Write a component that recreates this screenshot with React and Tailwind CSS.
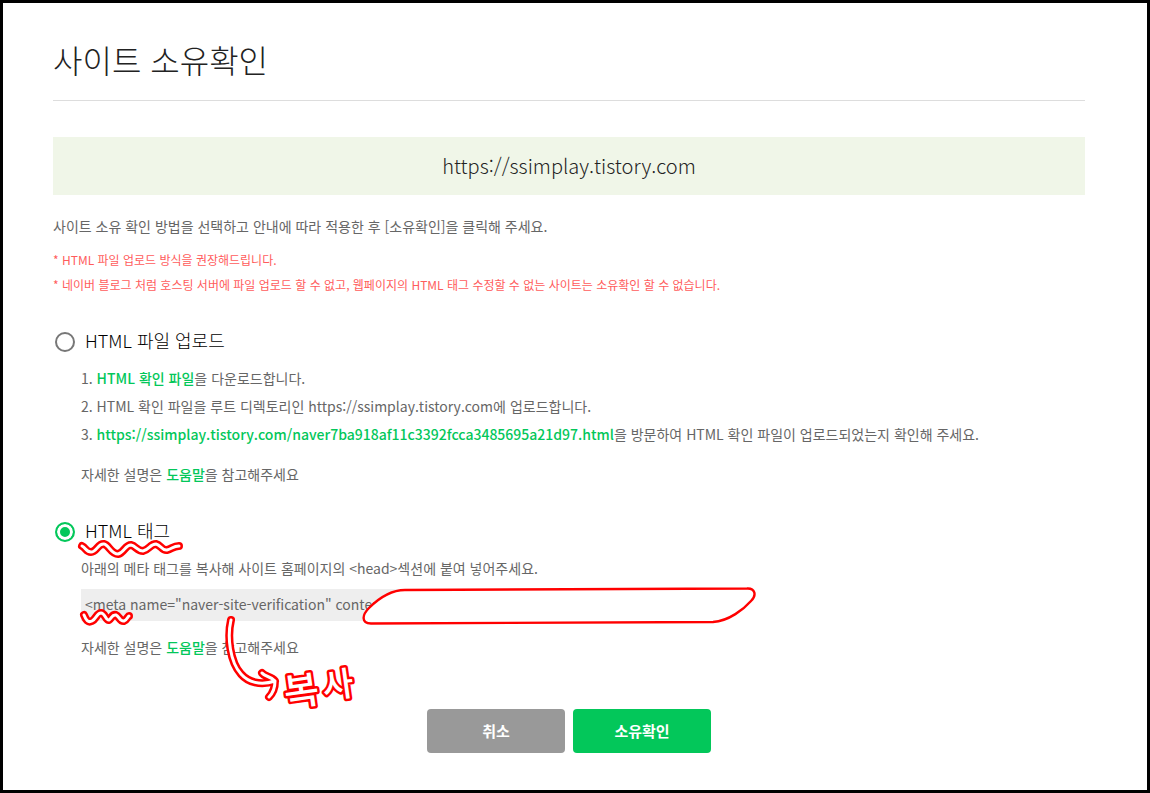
import { useState } from "react";

const SITE_URL = "https://ssimplay.tistory.com";
const META_TAG = '<meta name="naver-site-verification" content=';

function GreenLink({ children }) {
  return (
    <a href="#" className="font-medium text-[#03c75a]">
      {children}
    </a>
  );
}

function Method({ id, label, checked, onSelect, children }) {
  return (
    <section className="relative">
      <div className="flex h-6 items-center gap-2.5 pl-0.5">
        <input
          id={id}
          type="radio"
          name="method"
          checked={checked}
          onChange={onSelect}
          className="size-5 shrink-0 appearance-none rounded-full border-2 border-[#777] bg-white checked:border-[#03c75a] checked:bg-[#03c75a] checked:shadow-[inset_0_0_0_3px_white]"
        />
        <label htmlFor={id} className="pb-1 text-lg leading-5 font-light text-black">
          {label}
        </label>
      </div>
      <div className="pl-7">{children}</div>
    </section>
  );
}

// Red marker strokes with a white core
function Marker({ d }) {
  return (
    <g fill="none" strokeLinecap="round" strokeLinejoin="round">
      <path d={d} stroke="#ff0000" strokeWidth="8" />
      <path d={d} stroke="#ffffff" strokeWidth="3" />
    </g>
  );
}

function Notes() {
  return (
    <svg
      viewBox="53 520 710 200"
      width="710"
      height="200"
      className="pointer-events-none absolute top-0 left-0"
      aria-hidden="true"
    >
      <path
        d="M405 590 L747 588.500 C755 588 757 595 751 601 C744 609 729 621 713 622 L371 623.500 C361 623 362 615 369 608 C379 598 391 590 405 590 Z"
        fill="#fff"
        stroke="#ff0000"
        strokeWidth="2.400"
      />
      <Marker d="M82 546 C86 548 86 552 91 552 C97 552 98 543 104 544 C109 545 111 554 118 554 C124 553 125 545 131 545 C136 546 137 551 143 551 C149 550 150 544 156 544 C161 545 162 551 167 550 C172 549 173 546 179 546" />
      <Marker d="M84 615 C86 620 88 623 92 621 C96 619 97 613 101 613 C105 613 106 621 109 620 C112 618 112 614 116 615 C119 616 120 622 124 621 C127 620 128 616 129 616" />
      <Marker d="M231 620 C227 637 230 662 241 674 C248 682 260 686 275 681 M262 673 C265 677 271 676 275 681 C275 687 273 693 269 697" />
      <text
        fontFamily="'Noto Sans CJK KR', sans-serif"
        fontWeight="500"
        fill="#fff"
        stroke="#ff0000"
        strokeWidth="5"
        strokeLinejoin="round"
        paintOrder="stroke"
      >
        <tspan x="286" y="707" fontSize="38" rotate="-8">복</tspan>
        <tspan x="324" y="699" fontSize="34" rotate="-8">사</tspan>
      </text>
    </svg>
  );
}

export default function App() {
  const [method, setMethod] = useState("tag");

  return (
    <main
      lang="ko"
      className="min-h-screen border-[3px] border-black bg-white pt-8 pr-[62px] pb-9 pl-[50px] font-['Noto_Sans_CJK_KR',sans-serif] text-sm text-[#666]"
    >
      <h1 className="border-b border-[#ddd] pt-0.5 pb-[18px] text-[32px] leading-[45px] font-light text-[#222]">
        사이트 소유확인
      </h1>

      <p className="mt-9 bg-[#f0f6e8] py-[15px] text-center text-xl leading-7 font-light text-[#222]">
        {SITE_URL}
      </p>

      <p className="mt-5 leading-[22px]">
        사이트 소유 확인 방법을 선택하고 안내에 따라 적용한 후 [소유확인]을 클릭해 주세요.
      </p>
      <div className="mt-2.5 text-xs leading-[25px] text-[#ff5c5c]">
        <p>* HTML 파일 업로드 방식을 권장해드립니다.</p>
        <p>
          * 네이버 블로그 처럼 호스팅 서버에 파일 업로드 할 수 없고, 웹페이지의 HTML 태그 수정할 수 없는
          사이트는 소유확인 할 수 없습니다.
        </p>
      </div>

      <div className="mt-[33px] flex flex-col gap-8">
        <Method
          id="method-file"
          label="HTML 파일 업로드"
          checked={method === "file"}
          onSelect={() => setMethod("file")}
        >
          <ol className="mt-2.5 leading-7">
            <li>
              1. <GreenLink>HTML 확인 파일</GreenLink>을 다운로드합니다.
            </li>
            <li>2. HTML 확인 파일을 루트 디렉토리인 {SITE_URL}에 업로드합니다.</li>
            <li>
              3. <GreenLink>{SITE_URL}/naver7ba918af11c3392fcca3485695a21d97.html</GreenLink>을 방문하여
              HTML 확인 파일이 업로드되었는지 확인해 주세요.
            </li>
          </ol>
          <p className="mt-3 leading-7">
            자세한 설명은 <GreenLink>도움말</GreenLink>을 참고해주세요
          </p>
        </Method>

        <Method
          id="method-tag"
          label="HTML 태그"
          checked={method === "tag"}
          onSelect={() => setMethod("tag")}
        >
          <p className="mt-2.5 leading-7">
            아래의 메타 태그를 복사해 사이트 홈페이지의 &lt;head&gt;섹션에 붙여 넣어주세요.
          </p>
          <input
            type="text"
            readOnly
            aria-label="메타 태그"
            value={META_TAG}
            className="mt-[7px] block h-8 w-full max-w-[620px] bg-[#eee] px-1 pb-0.5 text-sm text-[#666] outline-none"
          />
          <p className="mt-3 leading-7">
            자세한 설명은 <GreenLink>도움말</GreenLink>을 참고해주세요
          </p>
          <Notes />
        </Method>
      </div>

      <div className="mt-12 flex justify-center gap-2 text-[15px] font-bold text-white">
        <button type="button" className="h-11 w-[138px] rounded bg-[#999]">
          취소
        </button>
        <button type="button" className="h-11 w-[138px] rounded bg-[#03c75a]">
          소유확인
        </button>
      </div>
    </main>
  );
}
